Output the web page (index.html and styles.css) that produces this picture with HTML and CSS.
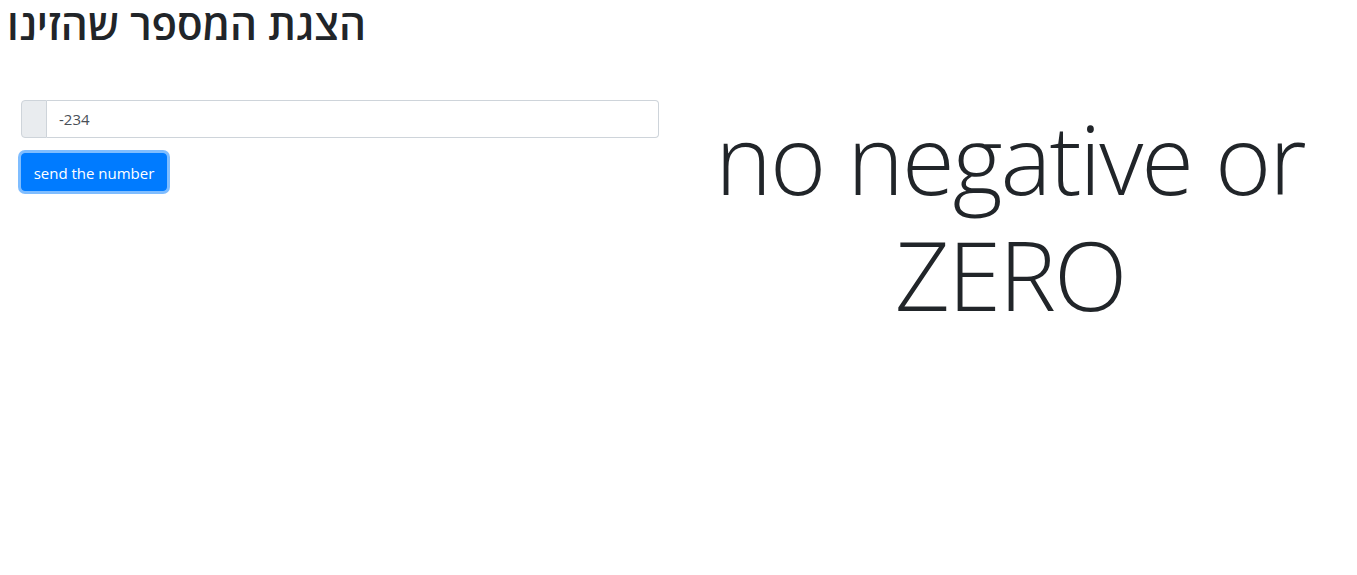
FILE: index.html
```html
<!DOCTYPE html>
<html lang="he">
<head>
<meta charset="utf-8">
<title>הצגת המספר שהזינו</title>
<link rel="stylesheet" href="styles.css">
</head>
<body>
<h1 class="title">הצגת המספר שהזינו</h1>
<div class="row">
  <div class="col col-form">
    <div class="input-group">
      <span class="input-group-text"></span>
      <input class="form-control" type="text" value="-234">
    </div>
    <button class="btn" type="button">send the number</button>
  </div>
  <div class="col col-result">
    <h1 class="display">no negative or ZERO</h1>
  </div>
</div>
</body>
</html>
```
FILE: styles.css
```css
* { box-sizing: border-box; }
html, body { margin: 0; padding: 0; background: #fff; }
body {
  font-family: "Open Sans", "Liberation Sans", sans-serif;
  color: #212529;
  font-size: 16px;
}
.title {
  margin: 0;
  padding: 0 0 0 7px;
  font-size: 42px;
  font-weight: 600;
  line-height: 48px;
  letter-spacing: 0;
  direction: ltr;
  text-align: left;
}
.row {
  display: flex;
  margin-top: 52px;
}
.col-form {
  width: 679px;
  padding: 0 20px 0 21px;
  display: flex;
  flex-direction: column;
  align-items: flex-start;
}
.input-group {
  display: flex;
  width: 100%;
  height: 38px;
}
.input-group-text {
  width: 26px;
  background: #e9ecef;
  border: 1px solid #ced4da;
  border-radius: 4px 0 0 4px;
}
.form-control {
  flex: 1;
  height: 38px;
  border: 1px solid #ced4da;
  border-left: 0;
  border-radius: 0 4px 4px 0;
  padding: 6px 12px;
  font-family: "Open Sans", "Liberation Sans", sans-serif;
  font-size: 15px;
  color: #495057;
  background: #fff;
  outline: none;
}
.btn {
  margin-top: 15px;
  height: 38px;
  width: 146px;
  padding: 1px 0 0;
  background: #007bff;
  color: #fff;
  border: 1px solid #007bff;
  border-radius: 4px;
  font-family: "Open Sans", "Liberation Sans", sans-serif;
  font-size: 15px;
  box-shadow: 0 0 0 3px rgba(0, 123, 255, 0.5);
}
.col-result {
  flex: 1;
  padding-right: 16px;
}
.display {
  margin: 0;
  font-size: 96px;
  font-weight: 300;
  line-height: 116px;
  letter-spacing: -2px;
  text-align: center;
}
```
